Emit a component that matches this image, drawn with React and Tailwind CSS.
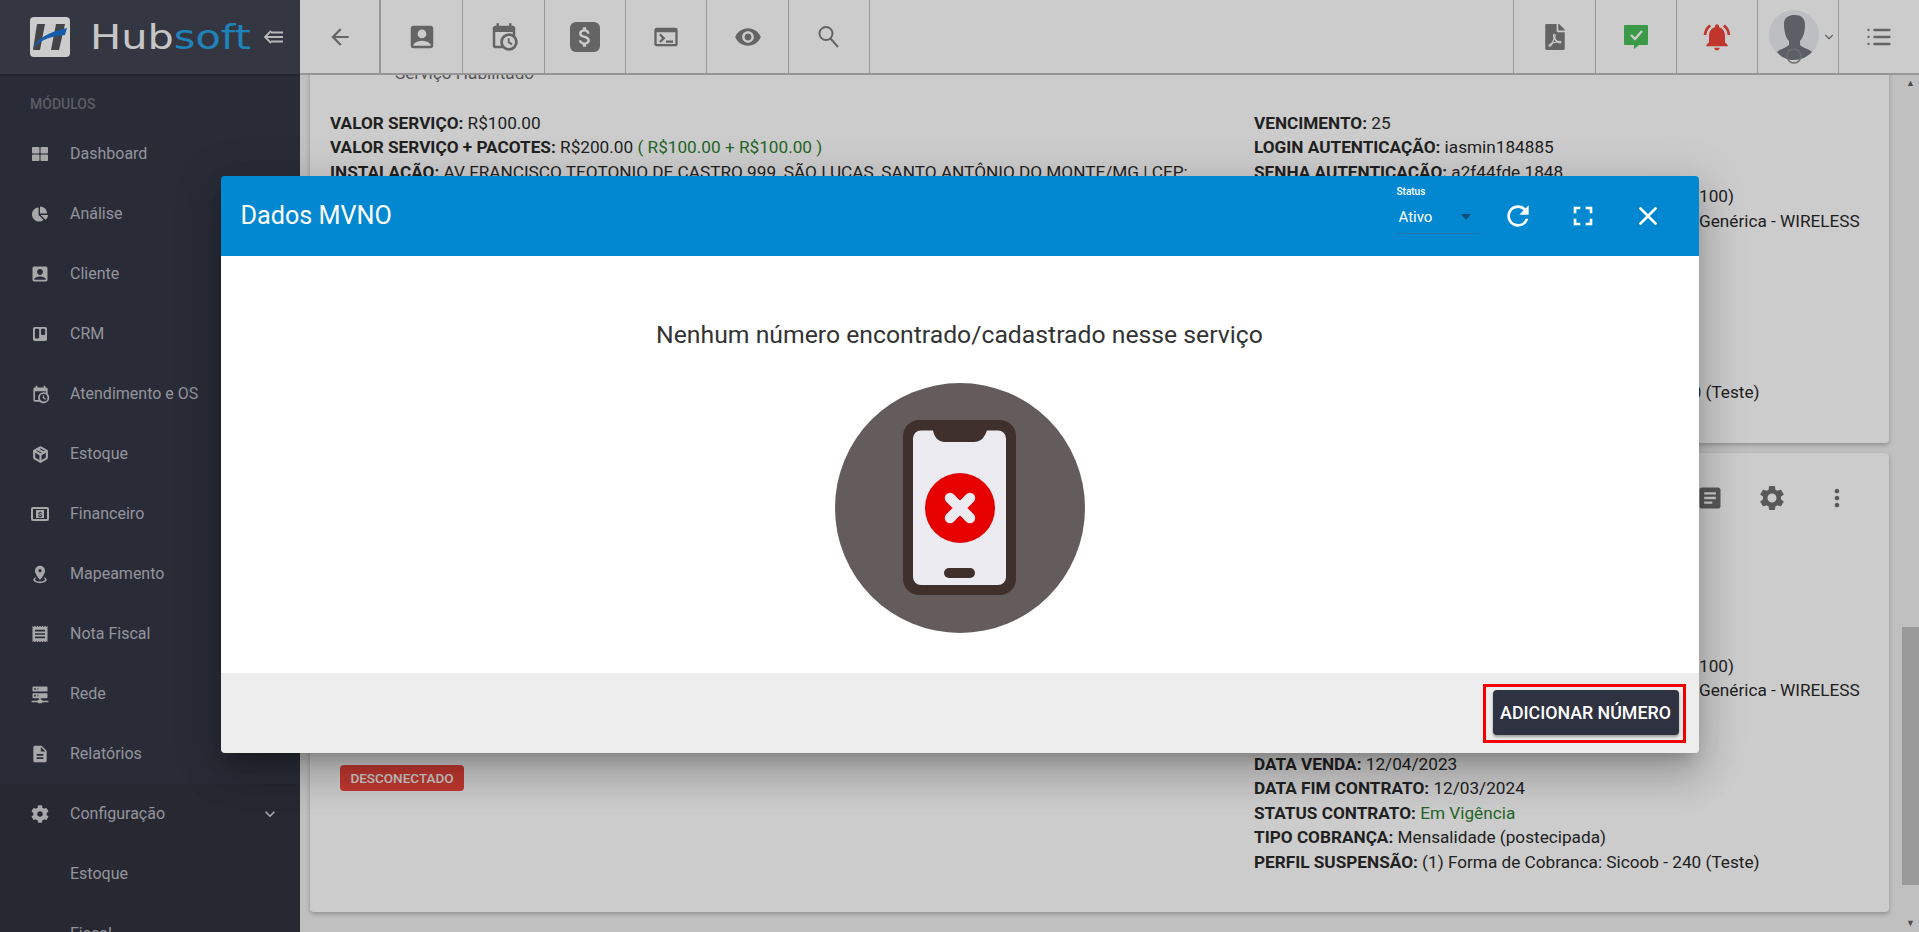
import React from 'react';
import { Package } from 'lucide-react';
import {
  MdAccountBox, MdArrowBack, MdAttachMoney, MdClose, MdDescription, MdFullscreen, MdKeyboardArrowDown,
  MdMoreVert, MdNotificationsActive, MdRefresh, MdReceipt, MdSettings, MdTerminal, MdVisibility, MdArticle,
} from 'react-icons/md';
import { FaChartPie, FaCog, FaFilePdf, FaThLarge, FaTrello } from 'react-icons/fa';
import { FiChevronDown, FiList } from 'react-icons/fi';

function CalendarClock({ size = 24 }) {
  return (
    <svg width={size} height={size} viewBox="0 0 24 24" fill="currentColor">
      <path d="M15,13H16.5V15.82L18.94,17.23L18.19,18.53L15,16.69V13M19,8H5V19H9.67C9.24,18.09 9,17.07 9,16A7,7 0 0,1 16,9C17.07,9 18.09,9.24 19,9.67V8M5,21C3.89,21 3,20.1 3,19V5C3,3.89 3.89,3 5,3H6V1H8V3H16V1H18V3H19A2,2 0 0,1 21,5V11.1C22.24,12.36 23,14.09 23,16A7,7 0 0,1 16,23C14.09,23 12.36,22.24 11.1,21H5M16,11.15A4.85,4.85 0 0,0 11.15,16C11.15,18.68 13.32,20.85 16,20.85A4.85,4.85 0 0,0 20.85,16C20.85,13.32 18.68,11.15 16,11.15Z" />
    </svg>
  );
}

function ServerNetwork({ size = 24 }) {
  return (
    <svg width={size} height={size} viewBox="0 0 24 24" fill="currentColor">
      <path d="M13,19H14A1,1 0 0,1 15,20H22V22H15A1,1 0 0,1 14,23H10A1,1 0 0,1 9,22H2V20H9A1,1 0 0,1 10,19H11V17H4A1,1 0 0,1 3,16V12A1,1 0 0,1 4,11H20A1,1 0 0,1 21,12V16A1,1 0 0,1 20,17H13V19M4,3H20A1,1 0 0,1 21,4V8A1,1 0 0,1 20,9H4A1,1 0 0,1 3,8V4A1,1 0 0,1 4,3M9,7H10V5H9V7M9,15H10V13H9V15M5,5V7H7V5H5M5,13V15H7V13H5Z" />
    </svg>
  );
}

function MapMarkerRadius({ size = 24 }) {
  return (
    <svg width={size} height={size} viewBox="0 0 24 24" fill="currentColor">
      <path d="M12,2C15.31,2 18,4.66 18,7.95C18,12.41 12,19 12,19C12,19 6,12.41 6,7.95C6,4.66 8.69,2 12,2M12,6A2,2 0 0,0 10,8A2,2 0 0,0 12,10A2,2 0 0,0 14,8A2,2 0 0,0 12,6M20,19C20,21.21 16.42,23 12,23C7.58,23 4,21.21 4,19C4,17.71 5.22,16.56 7.11,15.83L7.75,16.74C6.67,17.19 6,17.81 6,18.5C6,19.88 8.69,21 12,21C15.31,21 18,19.88 18,18.5C18,17.81 17.33,17.19 16.25,16.74L16.89,15.83C18.78,16.56 20,17.71 20,19Z" />
    </svg>
  );
}

function CashBox() {
  return (
    <svg width="18" height="14" viewBox="0 0 18 14">
      <rect x="1" y="1" width="16" height="12" rx="1" fill="none" stroke="currentColor" strokeWidth="2" />
      <rect x="5" y="3" width="8" height="8" fill="currentColor" />
      <text x="9" y="10" textAnchor="middle" fontSize="8" fontWeight="700" fill="#343745">$</text>
    </svg>
  );
}

function ThinSearch() {
  return (
    <svg width="26" height="26" viewBox="0 0 26 26" fill="none" stroke="currentColor" strokeWidth="2">
      <circle cx="10" cy="9.5" r="6.5" />
      <path d="M14.5 14.5L22 23" />
    </svg>
  );
}

function LogoMark() {
  return (
    <svg width="40" height="40" viewBox="0 0 40 40">
      <rect width="40" height="40" rx="4" fill="#ffffff" />
      <path d="M7 7H15L10 33H3Z" fill="#555558" />
      <path d="M26 7H35L29 33H21Z" fill="#555558" />
      <path d="M3 31C8 20 20 15 37 11L35 18C22 19 12 22 3 31Z" fill="#1c72d8" />
    </svg>
  );
}

function CollapseIcon() {
  return (
    <svg width="20" height="14" viewBox="0 0 20 14" fill="none" stroke="#e6e6e6" strokeWidth="1.8">
      <path d="M7 1L1 7L7 13" />
      <path d="M2 7H19M7 2.5H19M7 11.5H19" />
    </svg>
  );
}

function ChatCheck() {
  return (
    <svg width="26" height="26" viewBox="0 0 26 26">
      <path d="M2 1H24A1 1 0 0 1 25 2V20A1 1 0 0 1 24 21H16L11 25V21H2A1 1 0 0 1 1 20V2A1 1 0 0 1 2 1Z" fill="#4cc05a" />
      <path d="M8 11L12 15L19 7" fill="none" stroke="#fff" strokeWidth="2.4" />
    </svg>
  );
}

function Avatar() {
  return (
    <svg width="50" height="54" viewBox="0 0 50 54">
      <circle cx="25" cy="25" r="25" fill="#eceef3" />
      <path d="M15 14C15 7 20 5 26 5C32 5 36 8 36 15C36 22 34 28 31 31V35C34 38 40 39 43 42C38 47 32 50 25 50C18 50 12 47 8 42C11 39 17 38 20 35V31C17 28 15 22 15 14Z" fill="#74777f" />
      <circle cx="25" cy="46" r="7" fill="none" stroke="#8a8a8a" strokeWidth="1.5" />
    </svg>
  );
}

function PhoneError() {
  return (
    <svg width="250" height="250" viewBox="0 0 250 250">
      <circle cx="125" cy="125" r="125" fill="#645c5c" />
      <rect x="68" y="37" width="113" height="175" rx="16" fill="#40302c" />
      <rect x="78" y="47.5" width="93" height="154.5" rx="8" fill="#ecebf2" />
      <path d="M98 47C99 54 103 59 110 59H139C146 59 150 54 152 47Z" fill="#40302c" />
      <rect x="109" y="185" width="31" height="10" rx="5" fill="#40302c" />
      <circle cx="125" cy="125" r="35" fill="#e60000" />
      <path d="M115 115L135 135M135 115L115 135" stroke="#ecebf2" strokeWidth="10.5" strokeLinecap="round" />
    </svg>
  );
}

const menu = [
  ['Dashboard', <FaThLarge size={16} />],
  ['Análise', <FaChartPie size={16} />],
  ['Cliente', <MdAccountBox size={20} />],
  ['CRM', <FaTrello size={16} />],
  ['Atendimento e OS', <CalendarClock size={19} />],
  ['Estoque', <Package size={17} strokeWidth={3} />],
  ['Financeiro', <CashBox />],
  ['Mapeamento', <MapMarkerRadius size={20} />],
  ['Nota Fiscal', <MdReceipt size={20} />],
  ['Rede', <ServerNetwork size={20} />],
  ['Relatórios', <MdDescription size={20} />],
];

function Sidebar() {
  return (
    <aside className="w-[300px] shrink-0 h-full bg-[#343745] flex flex-col overflow-hidden text-[#b8b9c2]">
      <div className="h-[74px] shrink-0 bg-[#424452] flex items-center pl-[30px] shadow-[0_1px_3px_rgba(0,0,0,0.3)]">
        <LogoMark />
        <span className="ml-[20px] w-[174px] text-[34px] leading-none font-['DejaVu_Sans',sans-serif] text-[#f8f8f8] whitespace-nowrap origin-left scale-x-[1.22]">
          Hub<span className="text-[#27a3e6]">soft</span>
        </span>
        <CollapseIcon />
      </div>
      <div className="h-[50px] shrink-0 pl-[30px] pt-[20px] text-[14px] leading-[20px] font-medium text-[#72747f]">MÓDULOS</div>
      {menu.map(([label, icon]) => (
        <div key={label} className="h-[60px] shrink-0 flex items-center pl-[30px] text-[16px]">
          <span className="w-[20px] flex justify-center text-[#d2d2d6]">{icon}</span>
          <span className="ml-[20px]">{label}</span>
        </div>
      ))}
      <div className="bg-[#31333f] flex-1">
        <div className="h-[60px] flex items-center pl-[30px] text-[16px]">
          <span className="w-[20px] flex justify-center text-[#d2d2d6]"><FaCog size={18} /></span>
          <span className="ml-[20px]">Configuração</span>
          <MdKeyboardArrowDown size={20} className="ml-auto mr-[20px] text-[#d2d2d6]" />
        </div>
        <div className="h-[60px] flex items-center pl-[70px] text-[16px]">Estoque</div>
        <div className="h-[60px] flex items-center pl-[70px] text-[16px]">Fiscal</div>
      </div>
    </aside>
  );
}

function TopItem({ children, className = '' }) {
  return <div className={`h-full flex items-center justify-center border-r border-[#bdbdbd] text-[#7e7e7e] ${className}`}>{children}</div>;
}

function TopBar() {
  return (
    <header className="h-[75px] shrink-0 bg-white border-b-2 border-[#bcbcbc] flex relative z-10">
      <TopItem className="w-[81px] border-r-2"><MdArrowBack size={26} /></TopItem>
      <TopItem className="w-[82px]"><MdAccountBox size={30} /></TopItem>
      <TopItem className="w-[82px]"><CalendarClock size={30} /></TopItem>
      <TopItem className="w-[81px]">
        <span className="w-[30px] h-[30px] rounded-md bg-[#7e7e7e] flex items-center justify-center text-white"><MdAttachMoney size={26} /></span>
      </TopItem>
      <TopItem className="w-[81px]"><MdTerminal size={28} /></TopItem>
      <TopItem className="w-[82px]"><MdVisibility size={28} /></TopItem>
      <TopItem className="w-[81px]"><ThinSearch /></TopItem>
      <div className="flex-1 border-r border-[#bdbdbd]" />
      <TopItem className="w-[82px]"><FaFilePdf size={26} /></TopItem>
      <TopItem className="w-[81px]"><ChatCheck /></TopItem>
      <TopItem className="w-[81px] text-[#f04438]"><MdNotificationsActive size={32} className="text-[#f04438]" /></TopItem>
      <TopItem className="w-[81px] relative justify-start pl-[11px]">
        <Avatar />
        <FiChevronDown size={14} className="ml-[3px]" />
      </TopItem>
      <div className="w-[80px] h-full flex items-center justify-center text-[#7e7e7e]"><FiList size={28} /></div>
    </header>
  );
}

const contractLines = [
  ['DATA VENDA:', '12/04/2023'],
  ['DATA FIM CONTRATO:', '12/03/2024'],
  ['STATUS CONTRATO:', <span className="text-[#2e7d32]">Em Vigência</span>],
  ['TIPO COBRANÇA:', 'Mensalidade (postecipada)'],
  ['PERFIL SUSPENSÃO:', '(1) Forma de Cobranca: Sicoob - 240 (Teste)'],
];

function Line({ label, children }) {
  return (
    <p className="h-[24.45px] whitespace-nowrap">
      <b className="font-bold">{label}</b> {children}
    </p>
  );
}

function HiddenLabelLine({ label, children }) {
  return (
    <p className="h-[24.45px] whitespace-nowrap">
      <b className="inline-block w-[445px] font-bold">{label}</b>{children}
    </p>
  );
}

function ContractColumn() {
  return (
    <div>
      <HiddenLabelLine label="VELOCIDADE:">100)</HiddenLabelLine>
      <HiddenLabelLine label="TECNOLOGIA:">Genérica - WIRELESS</HiddenLabelLine>
      <div className="h-[48.9px]" />
      {contractLines.map(([label, value]) => <Line key={label} label={label}>{value}</Line>)}
    </div>
  );
}

function Cards() {
  return (
    <div className="flex-1 min-w-0 pl-[10px] pr-[13px] text-[17.2px] leading-[24.45px] text-[#2a2a2a]">
      <section className="bg-white rounded-b shadow-[0_2px_4px_rgba(0,0,0,0.25)] h-[388px] -mt-[20px] mb-[10px] pl-[20px] flex">
        <div className="w-[924px] pt-[6px]">
          <p className="pl-[65px] h-[50px] text-[#6b6b6b]">Serviço Habilitado</p>
          <Line label="VALOR SERVIÇO:">R$100.00</Line>
          <Line label="VALOR SERVIÇO + PACOTES:">R$200.00 <span className="text-[#2e7d32]">( R$100.00 + R$100.00 )</span></Line>
          <Line label="INSTALAÇÃO:">AV FRANCISCO TEOTONIO DE CASTRO 999, SÃO LUCAS, SANTO ANTÔNIO DO MONTE/MG | CEP:</Line>
        </div>
        <div className="pt-[56px]">
          <Line label="VENCIMENTO:">25</Line>
          <Line label="LOGIN AUTENTICAÇÃO:">iasmin184885</Line>
          <Line label="SENHA AUTENTICAÇÃO:">a2f44fde 1848</Line>
          <ContractColumn />
        </div>
      </section>
      <section className="bg-white rounded shadow-[0_2px_4px_rgba(0,0,0,0.25)] h-[459px] pl-[20px] relative">
        <div className="h-[90px] flex items-center justify-end pr-[38px] text-[#6f6f6f]">
          <MdArticle size={28} className="mr-[33px]" />
          <MdSettings size={30} className="mr-[36px]" />
          <MdMoreVert size={28} />
        </div>
        <div className="flex">
          <div className="w-[924px] pt-[222px] pl-[10px]">
            <span className="inline-block h-[26px] w-[124px] rounded-[4px] bg-[#ef473c] text-white text-[13.5px] leading-[26px] font-medium text-center">DESCONECTADO</span>
          </div>
          <div className="pt-[111px]">
            <ContractColumn />
          </div>
        </div>
      </section>
    </div>
  );
}

function Scrollbar() {
  return (
    <div className="w-[17px] shrink-0 bg-[#f1f1f1] flex flex-col items-center">
      <div className="h-[17px] flex items-center justify-center text-[#606060] text-[9px] leading-none">▲</div>
      <div className="h-[535px]" />
      <div className="w-full h-[258px] bg-[#c1c1c1]" />
      <div className="flex-1" />
      <div className="h-[17px] flex items-center justify-center text-[#606060] text-[9px] leading-none">▼</div>
    </div>
  );
}

function Modal() {
  return (
    <div className="absolute inset-0 z-20 bg-black/20 flex justify-center items-start pt-[176px]">
      <div className="w-[1478px] rounded overflow-hidden shadow-[0_11px_15px_-7px_rgba(0,0,0,0.2),0_24px_38px_3px_rgba(0,0,0,0.14),0_9px_46px_8px_rgba(0,0,0,0.12)]">
        <div className="h-[80px] bg-[#0288d1] flex items-center pl-[20px] pr-[35px] text-white">
          <h2 className="text-[25.2px] font-normal">Dados MVNO</h2>
          <div className="ml-auto w-[83px] h-[48px] self-start mt-[10px] border-b border-[#1c75ac] mr-[22px]">
            <div className="text-[10px] leading-[12px] font-medium">Status</div>
            <div className="flex items-center justify-between pl-[2px] pr-[9px] mt-[9px] text-[15px] leading-[20px]">
              <span>Ativo</span>
              <span className="w-0 h-0 border-x-[5px] border-x-transparent border-t-[6px] border-t-[#0a4f7a]" />
            </div>
          </div>
          <MdRefresh size={32} />
          <MdFullscreen size={32} className="ml-[33px]" />
          <MdClose size={32} className="ml-[33px]" />
        </div>
        <div className="h-[417px] bg-white flex flex-col items-center pt-[62px]">
          <h3 className="text-[24.75px] leading-[34px] text-[#333333] font-normal">Nenhum número encontrado/cadastrado nesse serviço</h3>
          <div className="mt-[31px]"><PhoneError /></div>
        </div>
        <div className="h-[80px] bg-[#ededed] flex items-start justify-end pr-[13px] pt-[11px]">
          <div className="border-[3px] border-[#f00000] pl-[7px] pr-[4px] pt-[3px] pb-[5px]">
            <button className="block w-[186px] h-[45px] pt-[2px] rounded bg-[#2f3241] text-white text-[17.8px] font-medium uppercase whitespace-nowrap shadow-[0_2px_3px_rgba(0,0,0,0.35)]">Adicionar número</button>
          </div>
        </div>
      </div>
    </div>
  );
}

export default function App() {
  return (
    <div className="relative w-full h-[932px] overflow-hidden flex bg-[#f0f0f0] font-['Roboto',sans-serif]">
      <Sidebar />
      <div className="flex-1 min-w-0 h-full flex flex-col">
        <TopBar />
        <main className="flex-1 min-h-0 flex overflow-hidden">
          <Cards />
          <Scrollbar />
        </main>
      </div>
      <Modal />
    </div>
  );
}
